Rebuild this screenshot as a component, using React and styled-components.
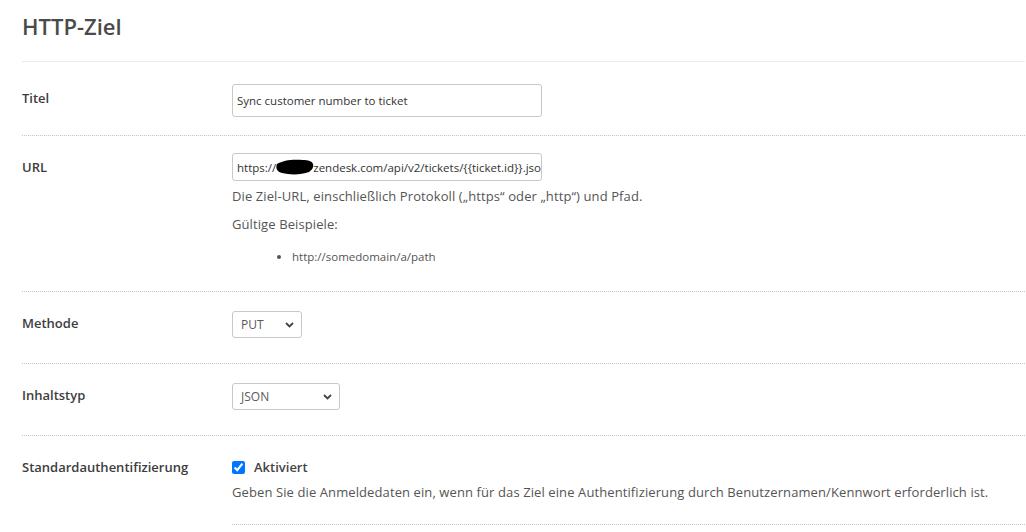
import styled, { createGlobalStyle } from 'styled-components';

// styles
const GlobalStyle = createGlobalStyle`
  body {
    margin: 0;
    background: #fff;
    font-family: "Open Sans", "Noto Sans", sans-serif;
    color: #333;
  }
`;

const StyledPage = styled.div`
  padding-left: 22px;
  padding-right: 1px;
`;

const StyledHeader = styled.header`
  height: 61px;
  border-bottom: 1px solid #ebebeb;
`;

const StyledTitle = styled.h1`
  margin: 0;
  font-size: 22px;
  line-height: 52px;
  font-weight: 600;
  color: #4a4a4a;
`;

const StyledRow = styled.div`
  display: grid;
  grid-template-columns: 210px 1fr;
  padding: ${({ $first }) => ($first ? '22px' : '17px')} 0 ${({ $flush }) => ($flush ? '0' : '18px')};
  border-bottom: ${({ $flush }) => ($flush ? 'none' : '1px dotted #c4c4c4')};
`;

const StyledLabel = styled.div`
  font-size: 13px;
  font-weight: 600;
  line-height: 28px;
  color: #3d3d3d;
`;

const StyledField = styled.div`
  min-width: 0;
`;

const StyledInput = styled.div`
  box-sizing: border-box;
  width: 310px;
  height: ${({ $tall }) => ($tall ? '33px' : '28px')};
  padding: 0 4px;
  border: 1px solid #c8c8c8;
  border-radius: 3px;
  display: flex;
  align-items: center;
  overflow: hidden;
  white-space: nowrap;
  font-size: 11.5px;
  color: #333;
`;

const StyledRedacted = styled.svg`
  flex: none;
  margin: 0 -2px 0 -1px;
`;

const StyledHint = styled.p`
  margin: ${({ $gap }) => $gap || 5}px 0 0;
  font-size: 13px;
  line-height: 20px;
  letter-spacing: 0.1px;
  color: #555;
`;

const StyledList = styled.ul`
  margin: 13px 0 6px;
  padding-left: 60px;
  font-size: 11.5px;
  line-height: 20px;
  color: #555;
`;

const StyledSelect = styled.div`
  box-sizing: border-box;
  width: ${({ $width }) => $width}px;
  height: 27px;
  margin: 2px 0 7px;
  padding: 0 7px 0 8px;
  border: 1px solid #c8c8c8;
  border-radius: 3px;
  display: flex;
  align-items: center;
  justify-content: space-between;
  font-size: 12px;
  color: #5a5a5a;
`;

const StyledCheckLine = styled.label`
  display: flex;
  align-items: center;
  gap: 9px;
  height: 28px;
  font-size: 13px;
  font-weight: 600;
  color: #444;
`;

const StyledCheckbox = styled.input`
  width: 13px;
  height: 13px;
  margin: 0;
  accent-color: #0075ff;
`;

const StyledSubsection = styled.div`
  padding-bottom: 22px;
  border-bottom: 1px dotted #c4c4c4;
`;

const Chevron = () => (
  <svg width="9" height="6" viewBox="0 0 9 6">
    <path d="M1 1l3.5 3.5L8 1" fill="none" stroke="#444" strokeWidth="1.8" />
  </svg>
);

const Select = ({ value, width }) => (
  <StyledSelect $width={width}>
    <span>{value}</span>
    <Chevron />
  </StyledSelect>
);

const App = () => (
  <>
    <GlobalStyle />
    <StyledPage>
      <StyledHeader>
        <StyledTitle>HTTP-Ziel</StyledTitle>
      </StyledHeader>

      <StyledRow $first>
        <StyledLabel>Titel</StyledLabel>
        <StyledField>
          <StyledInput $tall>Sync customer number to ticket</StyledInput>
        </StyledField>
      </StyledRow>

      <StyledRow>
        <StyledLabel>URL</StyledLabel>
        <StyledField>
          <StyledInput>
            https://
            <StyledRedacted width="40" height="18" viewBox="0 0 40 18">
              <path
                d="M2 6c6-4 16-5 26-4 5 0 9 1 10 4 1 3-1 6-4 8-8 3-19 3-27 1C3 14 0 11 2 6z"
                fill="#000"
              />
            </StyledRedacted>
            zendesk.com/api/v2/tickets/{'{{ticket.id}}'}.json
          </StyledInput>
          <StyledHint>Die Ziel-URL, einschließlich Protokoll („https“ oder „http“) und Pfad.</StyledHint>
          <StyledHint $gap={8}>Gültige Beispiele:</StyledHint>
          <StyledList>
            <li>http://somedomain/a/path</li>
          </StyledList>
        </StyledField>
      </StyledRow>

      <StyledRow>
        <StyledLabel>Methode</StyledLabel>
        <StyledField>
          <Select value="PUT" width={70} />
        </StyledField>
      </StyledRow>

      <StyledRow>
        <StyledLabel>Inhaltstyp</StyledLabel>
        <StyledField>
          <Select value="JSON" width={108} />
        </StyledField>
      </StyledRow>

      <StyledRow $flush>
        <StyledLabel>Standardauthentifizierung</StyledLabel>
        <StyledField>
          <StyledSubsection>
            <StyledCheckLine>
              <StyledCheckbox type="checkbox" defaultChecked />
              Aktiviert
            </StyledCheckLine>
            <StyledHint $gap={1}>
              Geben Sie die Anmeldedaten ein, wenn für das Ziel eine Authentifizierung durch
              Benutzernamen/Kennwort erforderlich ist.
            </StyledHint>
          </StyledSubsection>
        </StyledField>
      </StyledRow>
    </StyledPage>
  </>
);

export default App;
